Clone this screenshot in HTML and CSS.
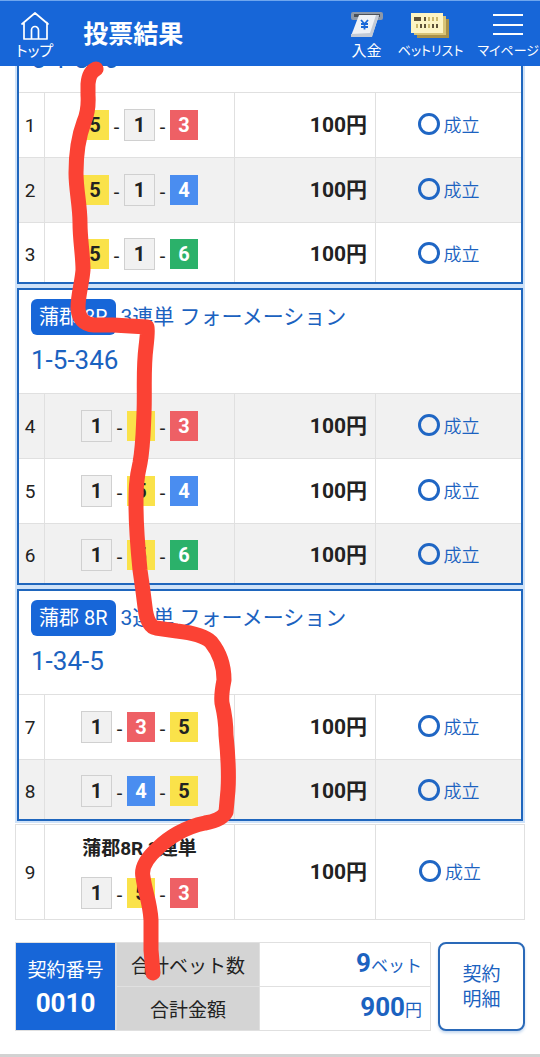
FILE: index.html
```html
<!DOCTYPE html>
<html lang="ja">

<head>
  <meta charset="UTF-8">
  <meta name="viewport" content="width=device-width, initial-scale=1.0">
  <title>投票結果</title>
  <link rel="stylesheet" href="styles.css">
</head>

<body>
  <header class="header">
    <a class="header-item header-top" href="#top">
      <svg width="30" height="30" viewBox="0 0 30 30" fill="none" stroke="#fff" stroke-width="1.700" stroke-linecap="round" stroke-linejoin="round">
        <path d="M2 14 15 3l13 11M4 12.500V29h23V12.500M11.500 29V20a3.500 3.500 0 0 1 7 0v9" />
      </svg>
      <span>トップ</span>
    </a>
    <h1>投票結果</h1>
    <nav>
      <a class="header-item" href="#deposit">
        <svg width="34" height="30" viewBox="0 0 34 30">
          <rect x="1" y="2" width="32" height="8" rx="2" fill="#8d98a8" />
          <rect x="4" y="4" width="26" height="3" fill="#4b5159" />
          <path d="M9 5h20l-7 21H1z" fill="#eef1f6" />
          <path d="M29 5h-3l-6 18-19 1v3h21z" fill="#c3cad5" />
          <path d="m11 10 3.500 4L18 10M11 14h7M11 17h7M14.500 14v5.500" fill="none" stroke="#1766d8" stroke-width="1.800" />
        </svg>
        <span>入金</span>
      </a>
      <a class="header-item header-long" href="#betlist">
        <svg width="40" height="30" viewBox="0 0 40 30">
          <path d="M7 9h32v19H7z" fill="#a9924a" />
          <path d="M4 6h32v19H4z" fill="#d9c477" />
          <path d="M1 3h32v20H1z" fill="#fdf4c3" />
          <path d="M4 7h7v4H4zM14 7h2v4h-2zM10 14h2v4h-2zM14 14h2v4h-2zM22 14h2v4h-2zM26 14h2v4h-2z" fill="#5e5238" />
          <path d="M18 7h2v4h-2zM22 7h2v4h-2zM26 7h2v4h-2zM6 14h2v4H6zM18 14h2v4h-2z" fill="#cbb86b" />
        </svg>
        <span>ベットリスト</span>
      </a>
      <button class="header-item header-long" type="button">
        <svg width="32" height="30" viewBox="0 0 32 30" stroke="#fff" stroke-width="2">
          <path d="M1 5h30M1 15h30M1 24h30" />
        </svg>
        <span>マイページ</span>
      </button>
    </nav>
  </header>

  <main>
    <section class="group">
      <div class="group-head scrolled">
        <p>5-1-346</p>
      </div>
      <table class="bets">
        <tr>
          <th scope="row">1</th>
          <td><div class="combo"><b class="n5">5</b><i>-</i><b class="n1">1</b><i>-</i><b class="n3">3</b></div></td>
          <td class="amount">100円</td>
          <td class="status"><span>成立</span></td>
        </tr>
        <tr class="even">
          <th scope="row">2</th>
          <td><div class="combo"><b class="n5">5</b><i>-</i><b class="n1">1</b><i>-</i><b class="n4">4</b></div></td>
          <td class="amount">100円</td>
          <td class="status"><span>成立</span></td>
        </tr>
        <tr>
          <th scope="row">3</th>
          <td><div class="combo"><b class="n5">5</b><i>-</i><b class="n1">1</b><i>-</i><b class="n6">6</b></div></td>
          <td class="amount">100円</td>
          <td class="status"><span>成立</span></td>
        </tr>
      </table>
    </section>

    <section class="group">
      <div class="group-head">
        <h2><span class="race">蒲郡 8R</span>3連単 フォーメーション</h2>
        <p>1-5-346</p>
      </div>
      <table class="bets">
        <tr class="even">
          <th scope="row">4</th>
          <td><div class="combo"><b class="n1">1</b><i>-</i><b class="n5">5</b><i>-</i><b class="n3">3</b></div></td>
          <td class="amount">100円</td>
          <td class="status"><span>成立</span></td>
        </tr>
        <tr>
          <th scope="row">5</th>
          <td><div class="combo"><b class="n1">1</b><i>-</i><b class="n5">5</b><i>-</i><b class="n4">4</b></div></td>
          <td class="amount">100円</td>
          <td class="status"><span>成立</span></td>
        </tr>
        <tr class="even">
          <th scope="row">6</th>
          <td><div class="combo"><b class="n1">1</b><i>-</i><b class="n5">5</b><i>-</i><b class="n6">6</b></div></td>
          <td class="amount">100円</td>
          <td class="status"><span>成立</span></td>
        </tr>
      </table>
    </section>

    <section class="group">
      <div class="group-head">
        <h2><span class="race">蒲郡 8R</span>3連単 フォーメーション</h2>
        <p>1-34-5</p>
      </div>
      <table class="bets">
        <tr>
          <th scope="row">7</th>
          <td><div class="combo"><b class="n1">1</b><i>-</i><b class="n3">3</b><i>-</i><b class="n5">5</b></div></td>
          <td class="amount">100円</td>
          <td class="status"><span>成立</span></td>
        </tr>
        <tr class="even">
          <th scope="row">8</th>
          <td><div class="combo"><b class="n1">1</b><i>-</i><b class="n4">4</b><i>-</i><b class="n5">5</b></div></td>
          <td class="amount">100円</td>
          <td class="status"><span>成立</span></td>
        </tr>
      </table>
    </section>

    <table class="bets single">
      <tr>
        <th scope="row">9</th>
        <td>
          <p class="race-name">蒲郡8R 3連単</p>
          <div class="combo"><b class="n1">1</b><i>-</i><b class="n5">5</b><i>-</i><b class="n3">3</b></div>
        </td>
        <td class="amount">100円</td>
        <td class="status"><span>成立</span></td>
      </tr>
    </table>

    <div class="summary">
      <div class="contract">
        <span>契約番号</span>
        <strong>0010</strong>
      </div>
      <table class="totals">
        <tr>
          <th scope="row">合計ベット数</th>
          <td><strong>9</strong>ベット</td>
        </tr>
        <tr>
          <th scope="row">合計金額</th>
          <td><strong>900</strong>円</td>
        </tr>
      </table>
      <button class="detail" type="button">契約<br>明細</button>
    </div>
  </main>

  <!-- Hand-drawn marker line over the results -->
  <svg class="marker" width="540" height="1057" viewBox="0 0 540 1057" aria-hidden="true">
    <path d="M96 69Q89 72 88 84L88 95Q89 110 84 122C78 138 76 155 76 173C76 190 80 205 80 223C80 240 83 255 83 270C82 283 78 295 78 308Q79 324 94 325L113 325L147 327Q148 330 146 347C143 370 145 390 144 413C143 437 143 447 140 463C136 480 136 490 136 505C136 530 138 550 140 570Q143 590 145 607Q147 626 156 628L177 631Q203 634 211 642Q224 658 224 680Q221 695 222 703Q226 720 226 735C228 755 229 775 228 790L226 812Q222 820 205 823C185 827 168 838 158 848Q140 864 143 877C145 892 150 902 151 920L151 950L153 973" />
  </svg>
</body>

</html>
```

FILE: styles.css
```css
* {
  box-sizing: border-box;
}

body {
  margin: 0;
  min-height: 100vh;
  font-family: Roboto, "Noto Sans CJK JP", sans-serif;
  color: #222;
  background: #fff;
  border-bottom: 3px solid #d2d2d2;
  position: relative;
  overflow: hidden;
}

h1,
h2,
p {
  margin: 0;
}

.header {
  position: fixed;
  top: 0;
  left: 0;
  right: 0;
  z-index: 1;
  height: 66px;
  padding-top: 3px;
  display: flex;
  align-items: center;
  background: #1766d8;
  border-top: 1px solid #6fa6ee;
  color: #fff;
}

.header h1 {
  flex: 1;
  margin-left: 30px;
  font-size: 25px;
  line-height: 32px;
}

.header nav {
  display: flex;
  gap: 14px;
  margin-right: 1px;
}

.header-item {
  display: flex;
  flex-direction: column;
  align-items: center;
  gap: 2px;
  padding: 0;
  border: 0;
  background: none;
  color: #fff;
  font: 15px/18px Roboto, "Noto Sans CJK JP", sans-serif;
  font-feature-settings: "palt";
  text-decoration: none;
  white-space: nowrap;
}

.header-long {
  font-size: 13px;
}

.header-top {
  margin-left: 16px;
}

/* the list opens scrolled, its first heading is under the header */
main {
  padding: 41px 15px 0;
}

.group {
  margin: 0 2px 4px;
  border: 2px solid #1f66bd;
  box-shadow: 0 0 0 2px #cfe2f8;
}

.group-head {
  padding: 9px 12px 0;
  height: 103px;
  color: #1b62c0;
}

.group-head h2 {
  display: flex;
  align-items: center;
  gap: 5px;
  font-size: 21px;
  font-weight: 400;
  line-height: 36px;
}

.group-head p {
  margin-top: 9px;
  font-size: 26px;
  line-height: 32px;
}

.group-head.scrolled {
  height: 49px;
  padding-top: 0;
}

.scrolled p {
  margin-top: 0;
}

.race {
  padding: 0 8px;
  border-radius: 6px;
  background: #1766d8;
  color: #fff;
  font-size: 20px;
}

.bets {
  width: 100%;
  table-layout: fixed;
  border-collapse: separate;
  border-spacing: 0;
}

.bets th,
.bets td {
  height: 65px;
  padding: 0;
  border-top: 1px solid #e0e0e0;
  border-left: 1px solid #e0e0e0;
}

.bets th {
  width: 25px;
  padding-right: 3px;
  border-left: 0;
  font-size: 19px;
  font-weight: 400;
}

.bets td:nth-child(2) {
  width: 190px;
}

.bets .amount {
  width: 141px;
  padding-right: 8px;
  padding-bottom: 4px;
  font-size: 21px;
  font-weight: 700;
  text-align: right;
}

.bets .status {
  padding-bottom: 2px;
  color: #1b62c0;
  font-size: 18px;
  font-weight: 350;
}

.group tr:last-child > * {
  height: 60px;
  padding-top: 3px;
}

.even {
  background: #f1f1f1;
}

.combo {
  display: flex;
  justify-content: center;
  align-items: center;
  font-size: 20px;
}

.combo i {
  width: 15px;
  padding-top: 3px;
  font-style: normal;
  text-align: center;
}

.combo b {
  width: 28px;
  line-height: 30px;
  color: #fff;
  text-align: center;
}

.combo .n1 {
  width: 31px;
  border: 1px solid #d0d0d0;
  background: #f1f1f1;
  color: #222;
}

.combo .n3 {
  background: #ee6065;
}

.combo .n4 {
  background: #4a8df0;
}

.combo .n5 {
  background: #fae24a;
  color: #222;
}

.combo .n6 {
  background: #2bb16a;
}

.status span {
  display: flex;
  justify-content: center;
  align-items: center;
  gap: 4px;
}

.status span::before {
  content: "";
  box-sizing: border-box;
  width: 22px;
  height: 22px;
  border: 3px solid #1f66c4;
  border-radius: 50%;
}

.single {
  margin-top: -1px;
  border: 1px solid #e0e0e0;
  border-top: 0;
}

.single th {
  width: 28px;
  padding-right: 0;
}

.single td,
.single th {
  height: 95px;
}

.race-name {
  margin-bottom: 14px;
  font-size: 19px;
  font-weight: 700;
  line-height: 28px;
  text-align: center;
}

.summary {
  display: flex;
  margin-top: 22px;
}

.contract {
  display: flex;
  flex-direction: column;
  align-items: center;
  justify-content: center;
  width: 101px;
  border: 1px solid #e0e0e0;
  background: #1766d8;
  background-clip: padding-box;
  color: #fff;
  font-size: 19px;
  line-height: 32px;
}

.contract strong {
  font-size: 26px;
}

.totals {
  flex: 1;
  border-collapse: collapse;
}

.totals th,
.totals td {
  height: 44px;
  padding: 0;
  border: 1px solid #e0e0e0;
}

.totals th {
  width: 143px;
  background: #d4d4d4;
  font-size: 19px;
  font-weight: 400;
}

.totals td {
  padding-right: 8px;
  color: #1b62c0;
  font-size: 17px;
  line-height: 32px;
  text-align: right;
}

.totals strong {
  font-size: 26px;
}

.detail {
  width: 87px;
  margin-left: 7px;
  padding: 0;
  border: 2px solid #2a69b8;
  border-radius: 8px;
  background: #fff;
  box-shadow: 0 2px 3px #c5d8ef;
  color: #1b62c0;
  font: 19px/25px Roboto, "Noto Sans CJK JP", sans-serif;
}

.marker {
  position: absolute;
  top: 0;
  left: 0;
  z-index: 2;
  fill: none;
  stroke: #fb4234;
  stroke-width: 15px;
  stroke-linecap: round;
  stroke-linejoin: round;
  pointer-events: none;
}
```
